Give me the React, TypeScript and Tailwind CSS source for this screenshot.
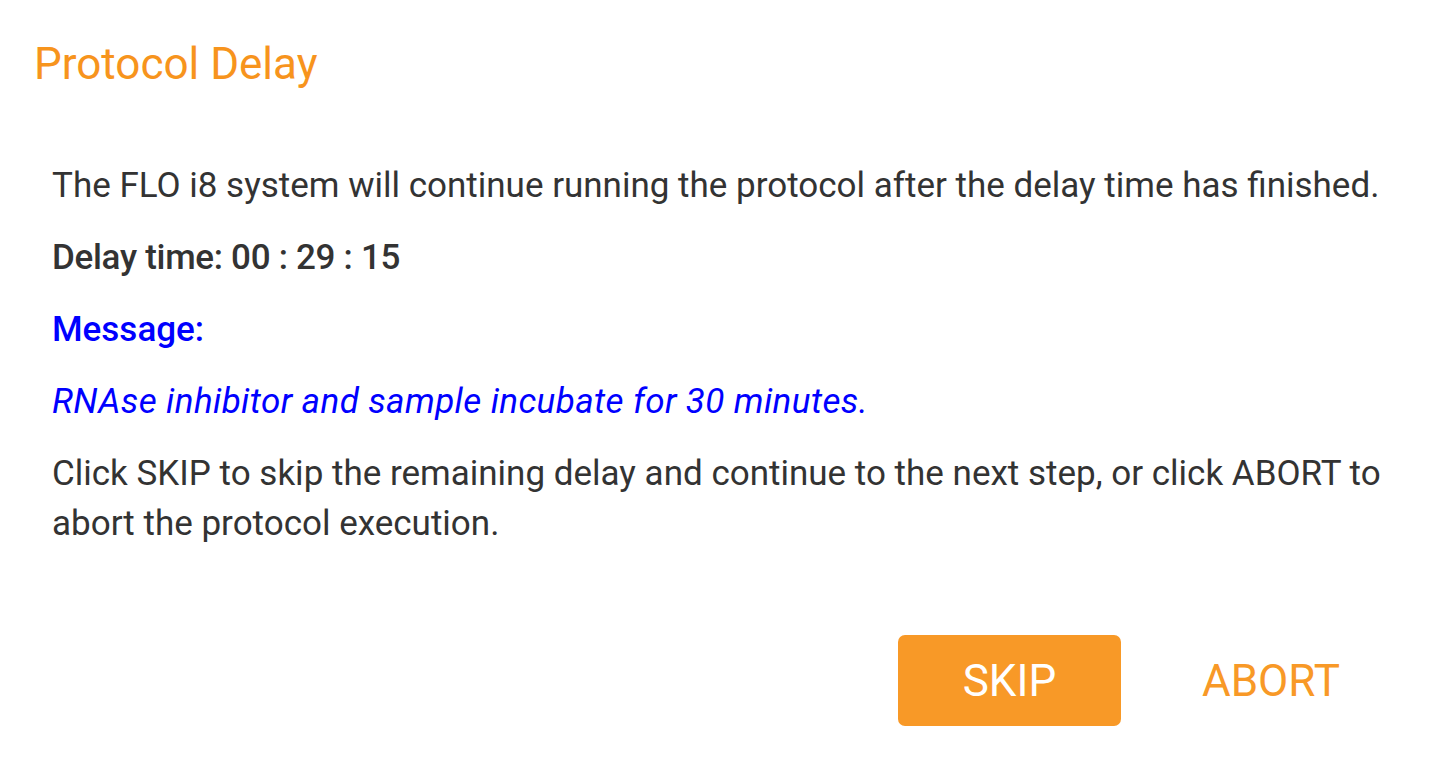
export default function App() {
  return (
    <div className="w-[1440px] h-[760px] bg-white font-['Roboto',sans-serif] text-[#333333]">
      <div className="pl-[34px] pt-[38px]">
        <h1 className="text-[44px] leading-[52px] text-[#f7941d]">Protocol Delay</h1>
      </div>
      <div className="pl-[52px] pr-[40px] pt-[71px] text-[35px] leading-[50px]">
        <p>The FLO i8 system will continue running the protocol after the delay time has finished.</p>
        <p className="mt-[22px] font-medium tracking-[-0.3px]">Delay time: 00 : 29 : 15</p>
        <p className="mt-[22px] font-medium text-[#0000ff]">Message:</p>
        <p className="mt-[22px] italic tracking-[0.4px] text-[#0000ff]">
          RNAse inhibitor and sample incubate for 30 minutes.
        </p>
        <p className="mt-[22px]">
          Click SKIP to skip the remaining delay and continue to the next step, or click ABORT to abort the protocol
          execution.
        </p>
      </div>
      <div className="flex justify-end items-center gap-[67px] pr-[86px] pt-[86px]">
        <button className="w-[223px] h-[91px] rounded-[7px] bg-[#f89927] text-white text-[44px]">SKIP</button>
        <button className="h-[91px] px-[14px] text-[44px] text-[#f89927]">ABORT</button>
      </div>
    </div>
  );
}
